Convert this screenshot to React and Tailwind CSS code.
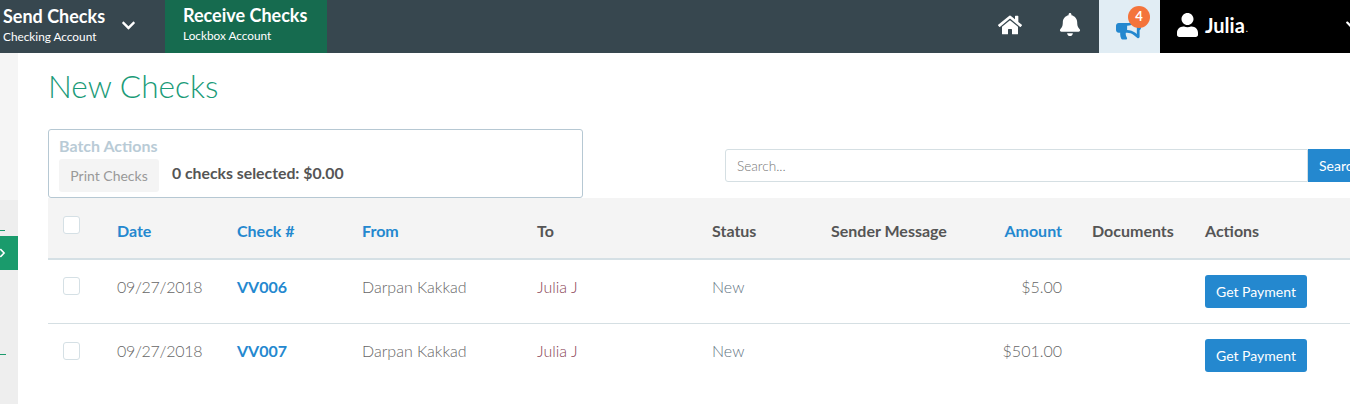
import React from "react";
import { FaHome, FaBell, FaBullhorn, FaUser, FaChevronDown, FaChevronRight } from "react-icons/fa";

const cols = "grid grid-cols-[69px_120px_125px_175px_175px_119px_120px_111px_143px_1fr] items-center";

const Row = ({ num, amount, last }) => (
  <div className={`${cols} text-[16px] font-light text-[#666] ${last ? "h-[63px]" : "h-[64px] border-b border-[#d5dfe3]"}`}>
    <div className={`pl-[15px] ${last ? "pb-[10px]" : "pb-[11px]"}`}><div className="w-[17px] h-[18px] border border-[#d5e0e5] rounded-[3px] bg-white" /></div>
    <div className="pb-[10px] tracking-[-0.3px]">09/27/2018</div>
    <div className="pb-[10px] font-bold text-[#2488cf]">{num}</div>
    <div className="pb-[10px]">Darpan Kakkad</div>
    <div className="pb-[10px] text-[#8a4455]">Julia J</div>
    <div className="pb-[10px] text-[#5f7482]">New</div>
    <div />
    <div className="pb-[10px] text-right">{amount}</div>
    <div />
    <div><button className="w-[102px] h-[33px] bg-[#2488cf] rounded-[3px] text-white text-[14px] font-normal">Get Payment</button></div>
  </div>
);

export default function App() {
  return (
    <div className="w-[1350px] h-[404px] overflow-hidden bg-white font-['Lato',sans-serif] flex flex-col">
      <header className="h-[53px] shrink-0 bg-[#37474f] flex text-white">
        <div className="w-[165px] flex items-center pl-[3px]">
          <div className="w-[112px] pb-[4px]">
            <div className="text-[18px] font-bold leading-[22px] whitespace-nowrap">Send Checks</div>
            <div className="text-[11.8px] leading-[16px] mt-[2px] whitespace-nowrap">Checking Account</div>
          </div>
          <FaChevronDown className="w-[15px] h-[15px] ml-[6px] -mt-[3px]" />
        </div>
        <div className="w-[162px] bg-[#166b4f] pl-[18px] pb-[6px] flex flex-col justify-center">
          <div className="text-[18px] font-bold leading-[22px] whitespace-nowrap">Receive Checks</div>
          <div className="text-[11.8px] leading-[16px] mt-[2px] whitespace-nowrap">Lockbox Account</div>
        </div>
        <div className="flex-1" />
        <div className="w-[61px] flex items-center justify-center pb-[4px] pl-[3px]"><FaHome className="w-[24px] h-[22px]" /></div>
        <div className="w-[60px] flex items-center justify-center pb-[4px] pl-[1px]"><FaBell className="w-[22px] h-[23px]" /></div>
        <div className="w-[61px] bg-[#e1edf4] flex items-center relative">
          <FaBullhorn className="w-[25px] h-[25px] ml-[17px] mt-[3px] text-[#2488cf]" />
          <span className="absolute left-[29px] top-[6px] w-[22px] h-[22px] rounded-full bg-[#f4743b] text-white text-[13px] font-bold flex items-center justify-center">4</span>
        </div>
        <div className="w-[190px] bg-black flex items-center pl-[17px] pb-[3px] overflow-hidden">
          <FaUser className="w-[21px] h-[24px] shrink-0" />
          <span className="ml-[7px] text-[20px] font-bold">Julia</span>
          <span className="text-[9px] mt-[8px] ml-[1px]">.</span>
          <FaChevronDown className="w-[14px] h-[14px] ml-[97px] shrink-0" />
        </div>
      </header>
      <div className="flex flex-1 min-h-0">
        <aside className="w-[18px] shrink-0 flex flex-col">
          <div className="h-[147px] bg-[#f5f5f5]" />
          <div className="h-[36px] bg-[#eeeeee] flex flex-col justify-end">
            <div className="w-[5px] h-px bg-[#1a9b6c] mb-[5px]" />
          </div>
          <div className="h-[34px] bg-[#1a9b6c] flex items-center text-white"><FaChevronRight className="w-[9px] h-[10px] -ml-[2px]" /></div>
          <div className="flex-1 bg-[#eeeeee] pt-[84px]"><div className="w-[6px] h-px bg-[#1a9b6c]" /></div>
        </aside>
        <main className="flex-1 min-w-0 pl-[30px]">
          <h1 className="text-[31.6px] font-light leading-[40px] mt-[13px] text-[#1a9b78]">New Checks</h1>
          <div className="flex items-end mt-[23px] w-[1400px]">
            <div className="w-[535px] h-[69px] border border-[#b6c8d3] rounded-[3px] pl-[10px] pt-[7px] shrink-0">
              <div className="text-[16px] font-bold leading-[17px] text-[#b9cbd6]">Batch Actions</div>
              <div className="flex items-center mt-[5px]">
                <div className="w-[100px] h-[33px] bg-[#f4f4f4] rounded-[3px] text-[14px] text-[#999] flex items-center justify-center">Print Checks</div>
                <div className="ml-[13px] text-[15.8px] font-bold text-[#555] -mt-[5px]">0 checks selected: $0.00</div>
              </div>
            </div>
            <div className="flex ml-[142px] mb-[16px]">
              <div className="w-[583px] h-[33px] border border-[#d5dfe3] rounded-l-[3px] flex items-center pl-[11px] pt-[2px] text-[13.6px] font-light text-[#777]">Search...</div>
              <div className="w-[80px] h-[33px] bg-[#2488cf] text-white text-[14px] pl-[11px] flex items-center">Search</div>
            </div>
          </div>
          <div className={`${cols} h-[62px] bg-[#f4f4f4] border-b-2 border-[#d5e0e5] text-[16px] font-bold text-[#555]`}>
            <div className="pl-[15px] pb-[7px]"><div className="w-[17px] h-[18px] border border-[#d5e0e5] rounded-[3px] bg-white" /></div>
            <div className="pt-[6px] text-[#2488cf]">Date</div>
            <div className="pt-[6px] text-[#2488cf]">Check #</div>
            <div className="pt-[6px] text-[#2488cf]">From</div>
            <div className="pt-[6px]">To</div>
            <div className="pt-[6px]">Status</div>
            <div className="pt-[6px] whitespace-nowrap">Sender Message</div>
            <div className="pt-[6px] text-right text-[#2488cf]">Amount</div>
            <div className="pt-[6px] pl-[30px]">Documents</div>
            <div className="pt-[6px]">Actions</div>
          </div>
          <Row num="VV006" amount="$5.00" />
          <Row num="VV007" amount="$501.00" last />
        </main>
      </div>
    </div>
  );
}
